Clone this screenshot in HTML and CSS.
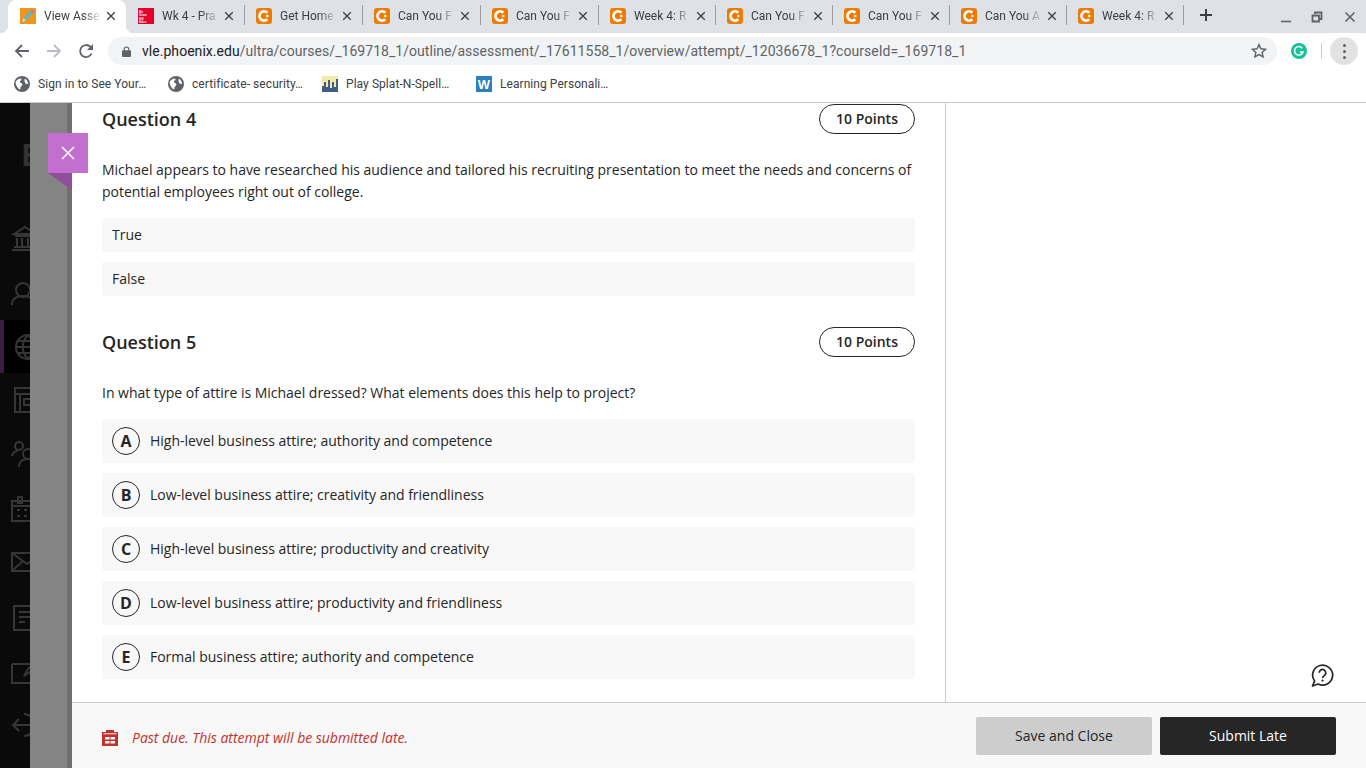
FILE: index.html
```html
<!DOCTYPE html>
<html lang="en">
<head>
<meta charset="utf-8">
<title>View Assessment</title>
<link rel="stylesheet" href="styles.css">
</head>
<body>
<svg class="sprite" aria-hidden="true">
  <symbol id="c" viewBox="0 0 16 16"><rect width="16" height="16" rx="3" fill="#ef7a00"/><path d="M11.300 4.700A4.600 4.600 0 1 0 11.300 11.300" fill="none" stroke="#fff" stroke-width="2.800"/><circle cx="11.300" cy="8" r="1.300" fill="#fff"/></symbol>
  <symbol id="x" viewBox="0 0 12 12"><path d="M1.500 1.500l9 9M10.500 1.500l-9 9" fill="none" stroke="#3c4043" stroke-width="1.600"/></symbol>
  <symbol id="globe" viewBox="0 0 16 16"><circle cx="8" cy="8" r="8" fill="#5f6368"/><path d="M1.500 6C3 3.500 5 2.500 7 2.500c1 1 .5 2-1 2.500C5 6 7 7 8 7.500c.8 1 0 2.500-1 3-.8 1-.8 2-.5 3C4 13 2 10 1.500 6zM11 2.800c2 1 3 3 3 5.200-1 .3-2.500-.3-3-1.500C10.500 5 10 3.500 11 2.800z" fill="#fff"/></symbol>
</svg>

<header class="chrome">
  <div class="tabstrip">
    <div class="tab active">
      <svg class="fav" viewBox="0 0 16 16"><rect width="16" height="16" fill="#f0961e"/><path d="M2 14l1.500-4 7.500-7.500 2.500 2.500L6 12.500z" fill="#5cb8c8"/><path d="M2 14l1.500-4 2.500 2.500z" fill="#f4d9a8"/><path d="M11 2.500l1-1 2.500 2.500-1 1z" fill="#e85a9a"/></svg>
      <span class="title">View Asse</span>
      <svg class="close"><use href="#x"/></svg>
    </div>
    <div class="tab plain">
      <svg class="fav" viewBox="0 0 16 16"><rect width="16" height="16" fill="#e4002b"/><text x="1" y="4.500" class="mh">Mc</text><text x="1" y="8" class="mh">Graw</text><text x="1" y="11.500" class="mh">Hill</text><text x="1" y="15" class="mh">Educ</text></svg>
      <span class="title">Wk 4 - Pra</span>
      <svg class="close"><use href="#x"/></svg>
      <i class="sep"></i>
    </div>
    <div class="tab"><svg class="fav"><use href="#c"/></svg><span class="title">Get Home</span><svg class="close"><use href="#x"/></svg><i class="sep"></i></div>
    <div class="tab"><svg class="fav"><use href="#c"/></svg><span class="title">Can You F</span><svg class="close"><use href="#x"/></svg><i class="sep"></i></div>
    <div class="tab"><svg class="fav"><use href="#c"/></svg><span class="title">Can You F</span><svg class="close"><use href="#x"/></svg><i class="sep"></i></div>
    <div class="tab narrow"><svg class="fav"><use href="#c"/></svg><span class="title">Week 4: R</span><svg class="close"><use href="#x"/></svg><i class="sep"></i></div>
    <div class="tab narrow"><svg class="fav"><use href="#c"/></svg><span class="title">Can You F</span><svg class="close"><use href="#x"/></svg><i class="sep"></i></div>
    <div class="tab narrow"><svg class="fav"><use href="#c"/></svg><span class="title">Can You F</span><svg class="close"><use href="#x"/></svg><i class="sep"></i></div>
    <div class="tab narrow"><svg class="fav"><use href="#c"/></svg><span class="title">Can You A</span><svg class="close"><use href="#x"/></svg><i class="sep"></i></div>
    <div class="tab narrow"><svg class="fav"><use href="#c"/></svg><span class="title">Week 4: R</span><svg class="close"><use href="#x"/></svg><i class="sep"></i></div>
    <svg class="newtab" viewBox="0 0 14 14"><path d="M7 1v12M1 7h12" stroke="#3c4043" stroke-width="2" fill="none"/></svg>
    <div class="winctl">
      <svg class="win-min" viewBox="0 0 12 12"><path d="M1 10.500h10" stroke="#5f6368" stroke-width="1.600" fill="none"/></svg>
      <svg class="win-max" viewBox="0 0 12 12"><path d="M4 3V1.500h6.500V8H8.500M1.500 4.500h6.500v6H1.500z" stroke="#5f6368" stroke-width="1.800" fill="none"/></svg>
      <svg class="win-close" viewBox="0 0 12 12"><path d="M1.500 1.500l9 9M10.500 1.500l-9 9" stroke="#5f6368" stroke-width="1.600" fill="none"/></svg>
    </div>
  </div>

  <div class="toolbar">
    <svg class="nav" viewBox="0 0 16 16"><path d="M15 8H2M8 2L2 8l6 6" fill="none" stroke="#5f6368" stroke-width="1.800"/></svg>
    <svg class="nav" viewBox="0 0 16 16"><path d="M1 8h13M8 2l6 6-6 6" fill="none" stroke="#b9bcc0" stroke-width="1.800"/></svg>
    <svg class="nav" viewBox="0 0 16 16"><path d="M13.600 10.500A6 6 0 1 1 12.400 3.800L14.500 6" fill="none" stroke="#5f6368" stroke-width="1.800"/><path d="M15 1v6H9z" fill="#5f6368"/></svg>
    <div class="omnibox">
      <svg class="lock" viewBox="0 0 10 12"><path d="M2.500 5V3.500a2.500 2.500 0 0 1 5 0V5" fill="none" stroke="#5f6368" stroke-width="1.300"/><rect y="4.500" width="10" height="7.500" rx="1" fill="#5f6368"/></svg>
      <span class="url"><b>vle.phoenix.edu</b>/ultra/courses/_169718_1/outline/assessment/_17611558_1/overview/attempt/_12036678_1?courseId=_169718_1</span>
      <svg class="star" viewBox="0 0 16 16"><path d="M8 1.600l1.900 4.200 4.600.5-3.400 3.100 1 4.500L8 11.600l-4.100 2.300 1-4.500L1.500 6.300l4.600-.5z" fill="none" stroke="#5f6368" stroke-width="1.400"/></svg>
    </div>
    <svg class="grammarly" viewBox="0 0 16 16"><circle cx="8" cy="8" r="8" fill="#15c39a"/><path d="M11.300 5.200A4.300 4.300 0 1 0 12 9H8.800" fill="none" stroke="#fff" stroke-width="1.500"/></svg>
    <i class="tbsep"></i>
    <div class="menu"><i></i><i></i><i></i></div>
  </div>

  <nav class="bookmarks">
    <div class="bm"><svg class="bmicon"><use href="#globe"/></svg><span>Sign in to See Your…</span></div>
    <div class="bm"><svg class="bmicon"><use href="#globe"/></svg><span>certificate- security…</span></div>
    <div class="bm"><svg class="bmicon" viewBox="0 0 16 16"><rect width="16" height="16" fill="#f3e9a8"/><path d="M0 16V10h2V6h2v5h2V4h2v8h2V6h2v5h2V3h2v13z" fill="#3f5d86"/></svg><span>Play Splat-N-Spell…</span></div>
    <div class="bm"><svg class="bmicon" viewBox="0 0 16 16"><rect width="16" height="16" fill="#2a7fc0"/><text x="8" y="13" class="wlogo">W</text></svg><span>Learning Personali…</span></div>
  </nav>
</header>

<div class="app">
  <aside class="rail">
    <div class="brand">B</div>
    <ul class="railnav">
      <li><svg viewBox="0 0 36 36"><path d="M7 13l11-7 11 7zM8 15h20M10 17v8M15 17v8M21 17v8M26 17v8M7 26h22M5 29h26"/></svg></li>
      <li><svg viewBox="0 0 36 36"><circle cx="16" cy="15" r="7"/><path d="M5 30c0-6 4-9 11-9s11 3 11 9"/></svg></li>
      <li class="current"><svg viewBox="0 0 36 36"><circle cx="24" cy="18" r="12"/><path d="M12 18h24M13.500 12h21M13.500 24h21M24 6c-7 7-7 17 0 24M24 6c7 7 7 17 0 24"/></svg></li>
      <li><svg viewBox="0 0 36 36"><path d="M8 6h26v24H8zM8 12h26M13 12v18M17 17h10v6H17z"/></svg></li>
      <li><svg viewBox="0 0 36 36"><circle cx="12" cy="10" r="4"/><circle cx="30" cy="10" r="4"/><circle cx="21" cy="18" r="5"/><path d="M5 20c1-4 3-5 6-5M12 31c0-6 4-8 9-8s9 2 9 8"/></svg></li>
      <li><svg viewBox="0 0 36 36"><path d="M5 11h30v20H5zM5 16h30M11 7h4v6h-4zM25 7h4v6h-4zM10 20h3M17 20h3M24 20h3M10 26h3M17 26h3M24 26h3"/></svg></li>
      <li><svg viewBox="0 0 36 36"><path d="M5 9h30v18H5zM5 9l15 11L35 9M5 27l11-10M35 27L24 17"/></svg></li>
      <li><svg viewBox="0 0 36 36"><path d="M7 8h22v24H7zM12 14h13M12 19h13M12 24h6"/></svg></li>
      <li><svg viewBox="0 0 36 36"><path d="M5 13h20M5 13v19h24V21M17 25l4-7 9-9 2 3-9 9z"/></svg></li>
      <li><svg viewBox="0 0 36 36"><path d="M17 9a11 11 0 1 1 0 22M24 20H6M12 14l-6 6 6 6"/></svg></li>
    </ul>
  </aside>

  <div class="scrim"></div>
  <button class="panelclose" aria-label="Close">
    <svg viewBox="0 0 16 16"><path d="M2 2l12 12M14 2L2 14" stroke="#fff" stroke-width="1.500" fill="none"/></svg>
  </button>

  <div class="panel">
    <div class="panelbody">
      <main class="questions">
        <section class="question">
          <div class="qhead"><h2>Question 4</h2><span class="points">10 Points</span></div>
          <p class="prompt">Michael appears to have researched his audience and tailored his recruiting presentation to meet the needs and concerns of potential employees right out of college.</p>
          <div class="answers">
            <div class="tf">True</div>
            <div class="tf">False</div>
          </div>
        </section>
        <section class="question">
          <div class="qhead"><h2>Question 5</h2><span class="points">10 Points</span></div>
          <p class="prompt">In what type of attire is Michael dressed? What elements does this help to project?</p>
          <div class="answers">
            <div class="choice"><span class="letter">A</span><span class="ctext">High-level business attire; authority and competence</span></div>
            <div class="choice"><span class="letter">B</span><span class="ctext">Low-level business attire; creativity and friendliness</span></div>
            <div class="choice"><span class="letter">C</span><span class="ctext">High-level business attire; productivity and creativity</span></div>
            <div class="choice"><span class="letter">D</span><span class="ctext">Low-level business attire; productivity and friendliness</span></div>
            <div class="choice"><span class="letter">E</span><span class="ctext">Formal business attire; authority and competence</span></div>
          </div>
        </section>
      </main>
      <div class="side"></div>
    </div>
    <svg class="help" viewBox="0 0 24 24"><path d="M2.500 22l2.100-4.900A10 10 0 1 1 8 20z" fill="none" stroke="#262626" stroke-width="1.700" stroke-linejoin="round"/><path d="M9.200 8.800a3.300 3.300 0 1 1 5 2.800c-1 .7-1.600 1.200-1.600 2.500" fill="none" stroke="#262626" stroke-width="1.700"/><circle cx="12.600" cy="16.600" r="1.100" fill="#262626"/></svg>
    <footer class="footer">
      <svg class="due" viewBox="0 0 16 16"><path d="M4 0h8v2h4v14H0V2h4z" fill="#c4302b"/><path d="M1.500 3.300h13v.9h-13zM3 7h4.500v2.500H3zM8.500 7H13v2.500H8.500zM3 11h4.500v2.500H3zM8.500 11H13v2.500H8.500z" fill="#f8f8f8"/></svg>
      <em class="late">Past due. This attempt will be submitted late.</em>
      <button class="btn save">Save and Close</button>
      <button class="btn submit">Submit Late</button>
    </footer>
  </div>
</div>
</body>
</html>
```
FILE: styles.css
```css
* { box-sizing: border-box; }
html, body { height: 100%; }
body {
  margin: 0;
  height: 768px;
  overflow: hidden;
  display: flex;
  flex-direction: column;
  background: #fff;
  font-family: "Open Sans", sans-serif;
  color: #262626;
}
.sprite { display: none; }

/* browser chrome */
.chrome { flex: none; height: 103px; display: flex; flex-direction: column; font-family: Roboto, sans-serif; border-bottom: 1px solid #ccc; }
.tabstrip { height: 33px; background: #dee1e6; display: flex; padding-left: 8px; }
.tab { flex: none; width: 118px; height: 33px; display: flex; align-items: center; padding-left: 12px; font-size: 12px; color: #3c4043; position: relative; }
.tab.narrow { width: 117px; }
.tab.active { background: #fff; border-radius: 8px 8px 0 0; }
.tab.active::before, .tab.active::after { content: ""; position: absolute; bottom: 0; width: 8px; height: 8px; }
.tab.active::before { left: -8px; background: radial-gradient(circle at 0 0, transparent 8px, #fff 8.5px); }
.tab.active::after { right: -8px; background: radial-gradient(circle at 100% 0, transparent 8px, #fff 8.5px); }
.fav { flex: none; width: 16px; height: 16px; margin: 0 8px 1px 0; }
.mh { font: 700 3px "Liberation Sans", sans-serif; fill: #fff; }
.wlogo { font: 700 13px "Liberation Sans", sans-serif; fill: #fff; text-anchor: middle; }
.title {
  flex: none;
  width: 55px;
  margin-bottom: 2px;
  overflow: hidden;
  white-space: nowrap;
  -webkit-mask-image: linear-gradient(90deg, #000 70%, rgba(0,0,0,.15) 100%);
  mask-image: linear-gradient(90deg, #000 70%, rgba(0,0,0,.15) 100%);
}
.close { flex: none; width: 10px; height: 10px; margin: 0 0 1px 7px; }
.sep { width: 1px; height: 20px; background: #9a9da1; margin: 0 -1px 3px auto; }
.newtab { flex: none; width: 14px; height: 14px; margin: 8px 0 0 16px; }
.winctl { margin-left: auto; display: flex; padding: 11px 10px 0 0; }
.winctl svg { width: 12px; height: 12px; }
.win-max { margin-left: 19px; }
.win-close { margin-left: 21px; }

.toolbar { height: 33px; display: flex; align-items: center; padding: 3px 0 0 14px; }
.nav { flex: none; width: 16px; height: 16px; margin-right: 16px; }
.omnibox { flex: none; width: 1169px; height: 28px; margin-left: -2px; border-radius: 14px; background: #f1f3f4; display: flex; align-items: center; padding-left: 14px; }
.lock { flex: none; width: 9px; height: 11px; margin-right: 11px; }
.url { font-size: 14px; color: #5f6368; white-space: nowrap; letter-spacing: .003em; }
.url b { font-weight: 400; color: #202124; }
.star { flex: none; width: 16px; height: 16px; margin-left: auto; margin-right: 10px; }
.grammarly { flex: none; width: 16px; height: 16px; margin-left: 14px; }
.tbsep { flex: none; width: 1px; height: 16px; background: #ccc; margin-left: 14px; }
.menu { flex: none; width: 28px; height: 28px; margin-left: 8px; border-radius: 50%; background: #e2e2e2; display: flex; flex-direction: column; align-items: center; justify-content: center; gap: 3px; }
.menu i { width: 3px; height: 3px; border-radius: 50%; background: #5f6368; }

.bookmarks { flex: 1; display: flex; align-items: center; padding: 0 0 1px 14px; font-size: 12px; color: #3c4043; letter-spacing: .06px; }
.bm { flex: none; width: 154px; display: flex; align-items: center; }
.bmicon { flex: none; width: 16px; height: 16px; margin-right: 8px; }

/* app */
.app { flex: 1; min-height: 0; display: flex; position: relative; }
.rail { flex: none; width: 72px; background: #0a0a0a; }
.brand { height: 109px; padding: 32px 0 0 21px; font: 700 30px/40px "Open Sans", sans-serif; color: #333; }
.railnav { list-style: none; margin: 0; padding: 0; }
.railnav li { height: 53.800px; padding: 9px 0 0 7px; }
.railnav li.current { background: #000; border-left: 4px solid #3a1c44; padding-left: 0; }
.railnav svg { display: block; width: 36px; height: 36px; fill: none; stroke: #363636; stroke-width: 2; }
.scrim { position: absolute; left: 30px; top: 0; bottom: 0; width: 42px; background: linear-gradient(90deg, #848484 0, #848484 37px, #6f6f6f 37px); }
.panelclose { position: absolute; left: 48px; top: 30px; width: 40px; height: 40px; padding: 12px; border: 0; background: #c26fd0; }
.panelclose svg { display: block; width: 16px; height: 16px; }
.panelclose::after { content: ""; position: absolute; left: 0; top: 40px; border-style: solid; border-width: 17px 0 0 24px; border-color: #8f4f9c transparent transparent transparent; }

.panel { flex: 1; min-width: 0; display: flex; flex-direction: column; position: relative; }
.panelbody { flex: 1; min-height: 0; display: flex; }
.questions { flex: none; width: 874px; padding: 1px 30px 0; border-right: 1px solid #ccc; display: flex; flex-direction: column; gap: 31px; }
.side { flex: 1; }
.qhead { display: flex; justify-content: space-between; align-items: center; height: 30px; }
.qhead h2 { margin: 0; font-size: 18px; font-weight: 600; color: #262626; }
.points { width: 96px; height: 30px; padding-bottom: 2px; border: 1px solid #262626; border-radius: 15px; display: flex; align-items: center; justify-content: center; font-size: 14px; font-weight: 600; }
.prompt { margin: 25px 0 15px; font-size: 14px; line-height: 22px; letter-spacing: -.016px; }
.answers { display: flex; flex-direction: column; gap: 10px; font-size: 14px; letter-spacing: -.016px; }
.tf { height: 34px; padding: 0 0 2px 10px; display: flex; align-items: center; background: #f8f8f8; border-radius: 2px; }
.choice { height: 44px; padding-left: 10px; display: flex; align-items: center; background: #f8f8f8; border-radius: 2px; }
.ctext { margin-bottom: 2px; }
.letter { flex: none; width: 28px; height: 28px; margin-right: 10px; border: 1px solid #262626; border-radius: 50%; display: flex; align-items: center; justify-content: center; font-size: 16px; font-weight: 700; }
.help { position: absolute; left: 1238px; top: 561px; width: 24px; height: 24px; }

.footer { flex: none; height: 66px; background: #f8f8f8; border-top: 1px solid #ccc; display: flex; align-items: center; padding: 0 30px; }
.due { flex: none; width: 16px; height: 16px; margin: 4px 14px 0 0; }
.late { font-size: 14px; color: #c4302b; margin: 3px auto 0 0; letter-spacing: -.016px; }
.btn { width: 176px; height: 38px; border: 0; border-radius: 2px; font: 14px "Open Sans", sans-serif; margin-left: 8px; }
.save { background: #cdcdcd; color: #262626; }
.submit { background: #262626; color: #fff; }
```
